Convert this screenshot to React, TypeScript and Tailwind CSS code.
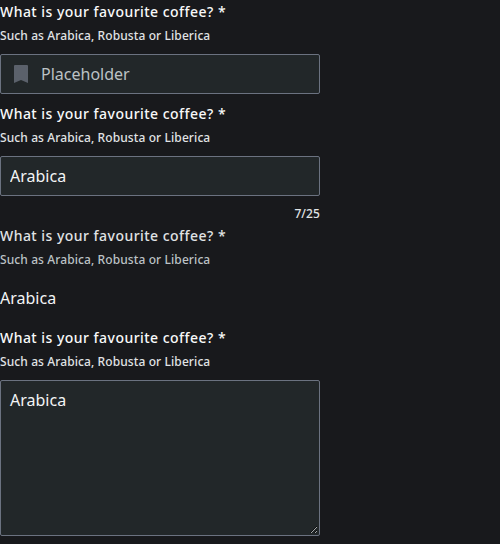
import React from "react";

function Label({ muted = false }: { muted?: boolean }) {
  return (
    <div className={muted ? "text-[#e0e3e5]" : "text-[#f8f9fa]"}>
      <div className="h-6 text-[14px] leading-6 font-medium tracking-[0.47px]">What is your favourite coffee? *</div>
      <div className={muted ? "h-6 text-[12px] leading-6 font-medium tracking-[0.1px] text-[#bcc2c5]" : "h-6 text-[12px] leading-6 font-medium tracking-[0.1px] text-[#e0e3e5]"}>
        Such as Arabica, Robusta or Liberica
      </div>
    </div>
  );
}

export default function App() {
  return (
    <main className="h-[544px] w-full overflow-hidden bg-[#18191c] font-['Noto_Sans',sans-serif] text-[#f3f4f5]">
      <div className="flex w-80 flex-col">
        <section className="h-[102px]">
          <Label />
          <div className="mt-1.5 flex h-10 items-center rounded-[2px] border border-[#6b7280] bg-[#222729] pl-[13px] text-base text-[#bcc2c5]">
            <svg className="mr-[13px] h-[18px] w-[14px]" viewBox="0 0 14 18" fill="#5b616b"><path d="M0 1a1 1 0 0 1 1-1h12a1 1 0 0 1 1 1v17l-7-3-7 3z" /></svg>
            Placeholder
          </div>
        </section>
        <section className="h-[122px]">
          <Label />
          <input aria-label="Favourite coffee" className="mt-1.5 block h-10 w-full rounded-[2px] border border-[#6b7280] bg-[#222729] px-[9px] text-base outline-none" defaultValue="Arabica" />
          <div className="mt-1.5 h-6 text-right text-[12px] leading-6 font-medium tracking-[0.1px] text-[#e0e3e5]">7/25</div>
        </section>
        <section className="h-[102px]">
          <Label muted />
          <div className="mt-1.5 h-10 text-base leading-10">Arabica</div>
        </section>
        <section>
          <Label />
          <div className="mt-1.5 h-[156px] rounded-[2px] border border-[#6b7280] bg-[#222729] p-px">
            <textarea aria-label="Favourite coffee notes" className="block h-full w-full resize bg-[#222729] px-2 py-1.5 text-base outline-none" defaultValue="Arabica" />
          </div>
        </section>
      </div>
    </main>
  );
}
